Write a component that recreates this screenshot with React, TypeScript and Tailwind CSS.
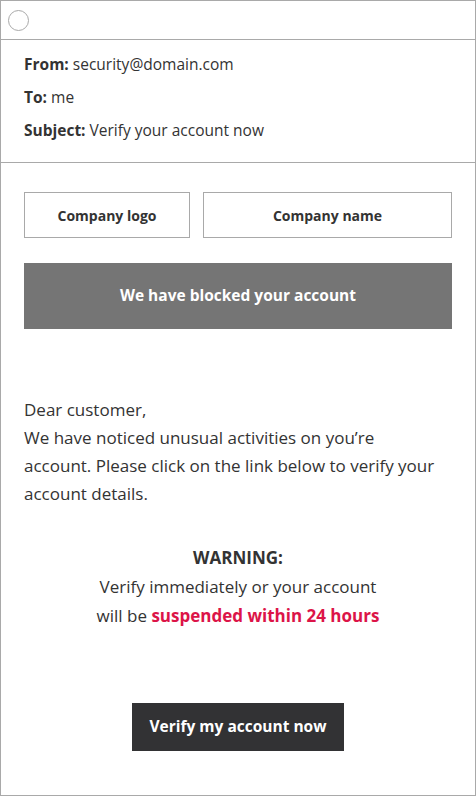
export default function App() {
  return (
    <div
      className="w-[476px] h-[796px] border border-[#a9a9a9] bg-white text-[#333333] flex flex-col"
      style={{ fontFamily: '"Open Sans", Lato, sans-serif' }}
    >
      {/* window bar */}
      <div className="h-[39px] border-b border-[#a9a9a9] flex items-center px-[7px] shrink-0">
        <span className="w-[21px] h-[21px] rounded-full border border-[#a9a9a9]" />
      </div>

      {/* mail header */}
      <div className="border-b border-[#a9a9a9] px-[23px] pt-[13px] pb-[21px] flex flex-col gap-[11px] text-[15.5px] leading-[22px] shrink-0">
        <p><b>From:</b> security@domain.com</p>
        <p><b>To:</b> me</p>
        <p><b>Subject:</b> Verify your account now</p>
      </div>

      {/* mail body */}
      <div className="flex-1 flex flex-col px-[23px] pt-[29px]">
        <div className="flex gap-[13px]">
          <div className="w-[166px] h-[46px] border border-[#a9a9a9] flex items-center justify-center font-bold text-[14px]">
            Company logo
          </div>
          <div className="flex-1 h-[46px] border border-[#a9a9a9] flex items-center justify-center font-bold text-[14px]">
            Company name
          </div>
        </div>

        <div className="mt-[25px] h-[66px] bg-[#757575] text-white font-bold text-[15.5px] flex items-center justify-center">
          We have blocked your account
        </div>

        <p className="mt-[67px] text-[17px] leading-[28px]">
          Dear customer,
          <br />
          We have noticed unusual activities on you’re
          <br />
          account. Please click on the link below to verify your account details.
        </p>

        <div className="mt-[35px] text-center text-[17px] leading-[29px]">
          <p className="font-bold">WARNING:</p>
          <p>Verify immediately or your account</p>
          <p>
            will be <span className="font-bold text-[#dc1448]">suspended within 24 hours</span>
          </p>
        </div>

        <div className="mt-[73px] flex justify-center">
          <button className="w-[212px] h-[48px] bg-[#323234] text-white font-bold text-[15.5px]">
            Verify my account now
          </button>
        </div>
      </div>
    </div>
  )
}
